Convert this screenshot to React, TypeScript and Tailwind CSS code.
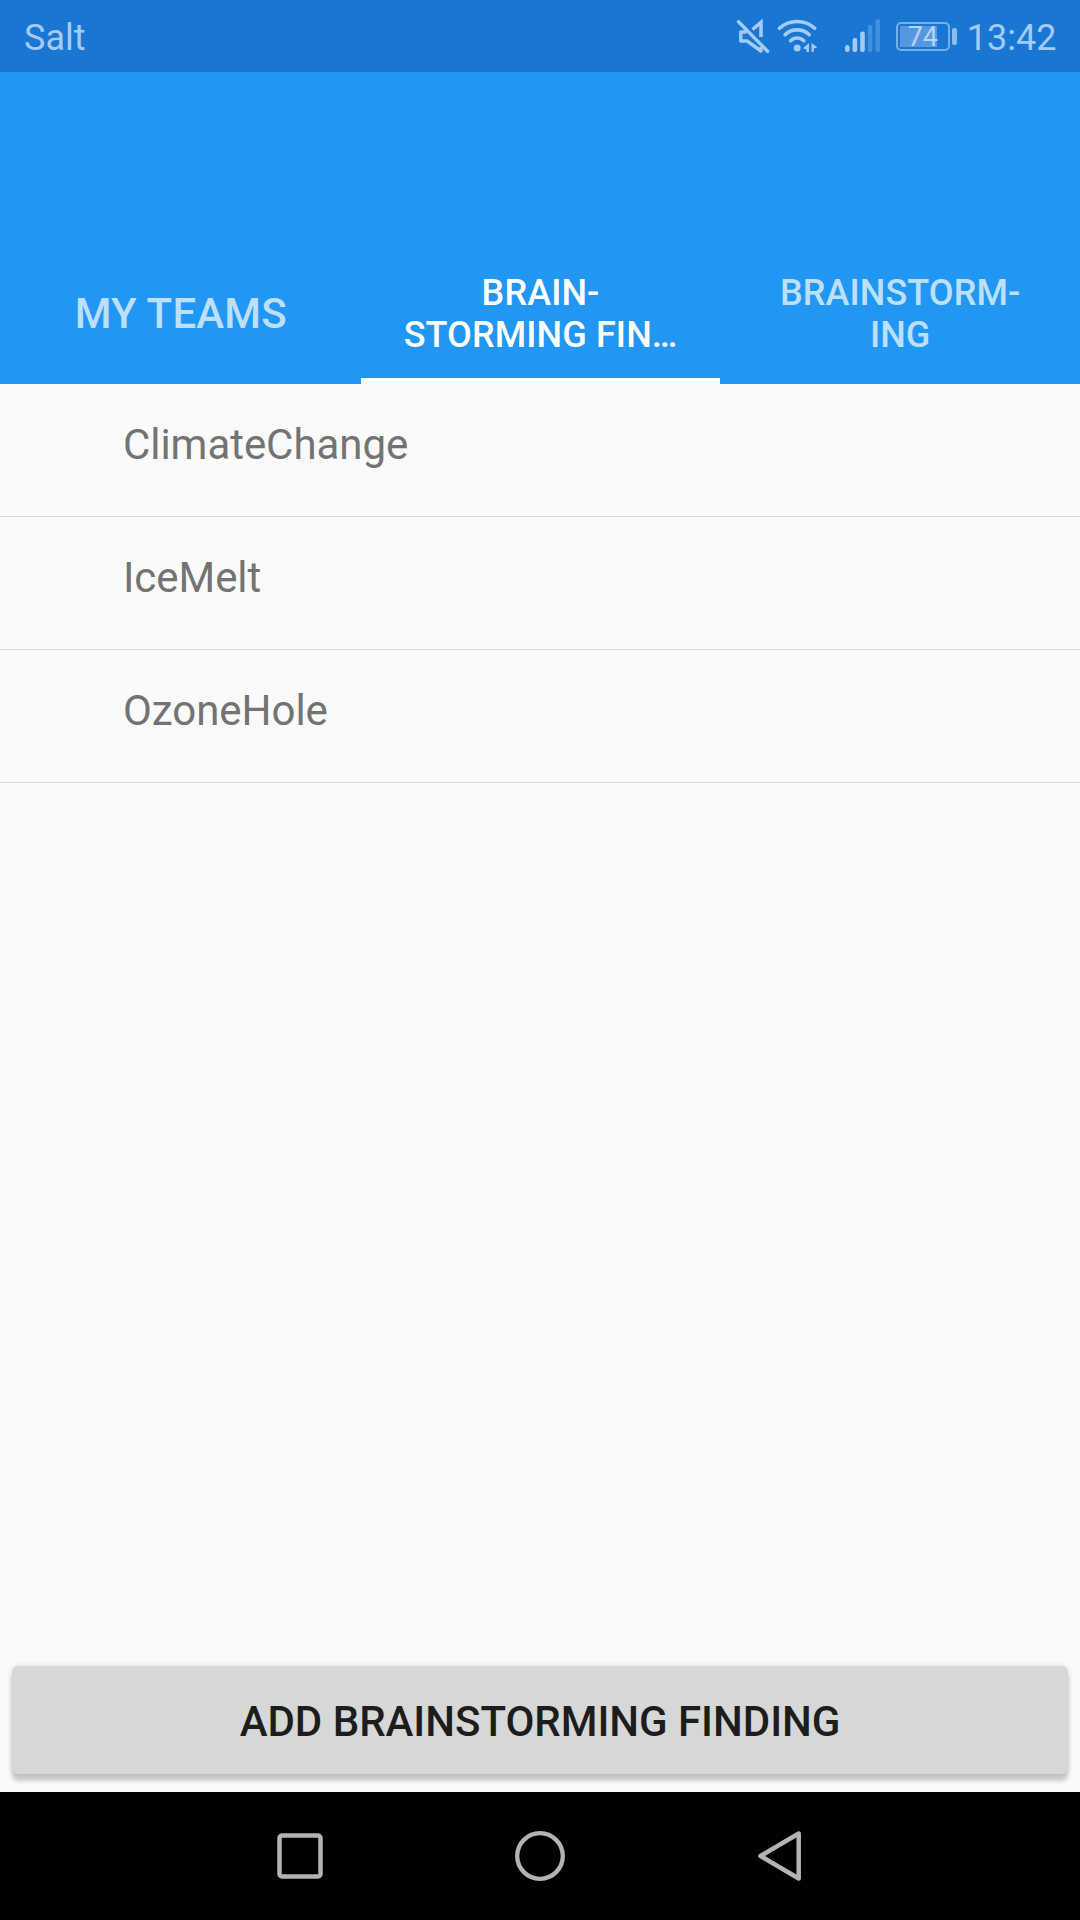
const topics = ["ClimateChange", "IceMelt", "OzoneHole"];

function MuteIcon() {
  return (
    <svg className="h-[72px] w-[36px]" viewBox="735 0 36 72" fill="none" stroke="currentColor">
      <path d="M752.5 29.5 L761 22.3 V37" strokeWidth="3.6" strokeLinejoin="miter" />
      <path d="M746.5 32 H740.8 V41 H747 L761 51 V47" strokeWidth="3.4" strokeLinejoin="round" />
      <path d="M738.5 21.8 L767.6 51.2" strokeWidth="3.4" strokeLinecap="round" />
    </svg>
  );
}

function WifiIcon() {
  return (
    <svg className="ml-[6px] h-[72px] w-[41px]" viewBox="777 0 41 72" fill="none" stroke="currentColor" strokeWidth="3.6" strokeLinecap="round">
      <path d="M779.5 28.3 A26 26 0 0 1 814.7 28.3" />
      <path d="M785 34.8 A17.5 17.5 0 0 1 809.3 34.8" />
      <path d="M790.6 40.7 A9.4 9.4 0 0 1 803.8 40.7" />
      <circle cx="797.2" cy="48" r="3.5" fill="currentColor" stroke="none" />
      <path d="M809 43 V52 H806.5 V49.5 L803 48.3 Z M811.5 43 L817.3 47.3 L814 48.5 L813.5 52 H811.5 Z" fill="currentColor" stroke="none" />
    </svg>
  );
}

function SignalIcon() {
  return (
    <svg className="ml-[26px] h-[72px] w-[37px]" viewBox="844 0 37 72" fill="currentColor">
      <rect x="845" y="45" width="4.6" height="7" rx="2.2" />
      <rect x="852.6" y="38" width="4.6" height="14" rx="2" />
      <rect x="860.2" y="31.5" width="4.6" height="20.5" rx="2" />
      <rect x="867.8" y="25" width="4.6" height="27" rx="2" opacity="0.3" />
      <rect x="875.4" y="19" width="4.6" height="33" rx="2" opacity="0.3" />
    </svg>
  );
}

function Battery() {
  return (
    <div className="ml-[15px] flex items-center gap-[2px]">
      <div className="flex h-[29px] w-[54px] rounded-[5px] border-2 border-[#76b0ea] p-[2px]">
        <div className="flex h-full w-[37px] items-center justify-center bg-[#5598e0]">
          <span className="mt-[2px] ml-[9px] text-[27px] leading-[20px] text-[#b4d5f7]">74</span>
        </div>
      </div>
      <div className="h-[17px] w-[5px] rounded-[2px] bg-[#8abcf0]" />
    </div>
  );
}

function StatusBar() {
  return (
    <div className="flex h-[72px] items-center justify-between bg-[#1976d2] pr-[23.5px] pl-[24px] text-[36px] text-[#a3cbf5]">
      <span className="mt-[3px] leading-[42px]">Salt</span>
      <div className="flex items-center">
        <MuteIcon />
        <WifiIcon />
        <SignalIcon />
        <Battery />
        <span className="mt-[3px] ml-[10px] leading-[42px]">13:42</span>
      </div>
    </div>
  );
}

function Header() {
  return (
    <header className="flex h-[312px] items-end bg-[#2196f3] font-medium tracking-[0.1px] text-[#bce0fb]">
      <div className="flex h-[144px] flex-1 items-center justify-center pt-[2px] pl-px text-[42px] leading-[49px] tracking-[0.2px]">MY TEAMS</div>
      <div className="flex h-[144px] flex-1 flex-col justify-end text-center text-[36px] leading-[42px] text-white">
        <div className="mb-[22px]">
          <div>BRAIN-</div>
          <div>STORMING FIN…</div>
        </div>
        <div className="h-[6px] bg-white" />
      </div>
      <div className="flex h-[144px] flex-1 flex-col justify-end pb-[28px] text-center text-[36px] leading-[42px]">
        <div>BRAINSTORM-</div>
        <div>ING</div>
      </div>
    </header>
  );
}

function NavBar() {
  return (
    <nav className="relative flex h-[128px] items-center justify-center gap-[140px] bg-black text-[#b3b3b3]">
      <svg className="h-[100px] w-[100px]" viewBox="0 0 100 100" fill="none" stroke="currentColor" strokeWidth="4.5">
        <rect x="29.5" y="29.5" width="41" height="41" rx="2.5" />
      </svg>
      <svg className="h-[100px] w-[100px]" viewBox="0 0 100 100" fill="none" stroke="currentColor" strokeWidth="4.3">
        <circle cx="50" cy="50" r="22.8" />
      </svg>
      <svg className="h-[100px] w-[100px]" viewBox="0 0 100 100" fill="none" stroke="currentColor" strokeWidth="4.5" strokeLinejoin="round">
        <path d="M68.7 27.5 V72.5 L30.5 50 Z" />
      </svg>
    </nav>
  );
}

export default function App() {
  return (
    <div className="flex h-[1920px] w-[1080px] flex-col overflow-hidden bg-[#fafafa] font-['Roboto',sans-serif]">
      <StatusBar />
      <Header />
      <ul className="flex-1">
        {topics.map((topic) => (
          <li key={topic} className="h-[133px] border-b border-[#dadada] pt-[36px] pl-[123px] text-[42px] leading-[49px] tracking-[-0.05px] text-[#737373]">
            {topic}
          </li>
        ))}
      </ul>
      <div className="px-[12px] pb-[18px]">
        <button className="flex h-[108px] w-full items-center justify-center rounded-[6px] bg-[#d6d8d7] pt-[3px] text-[42px] leading-[49px] font-medium tracking-[-0.03px] text-[#1d1d1d] shadow-[0_7px_4px_rgba(0,0,0,0.19),0_0_6px_rgba(0,0,0,0.12)]">
          ADD BRAINSTORMING FINDING
        </button>
      </div>
      <NavBar />
    </div>
  );
}
